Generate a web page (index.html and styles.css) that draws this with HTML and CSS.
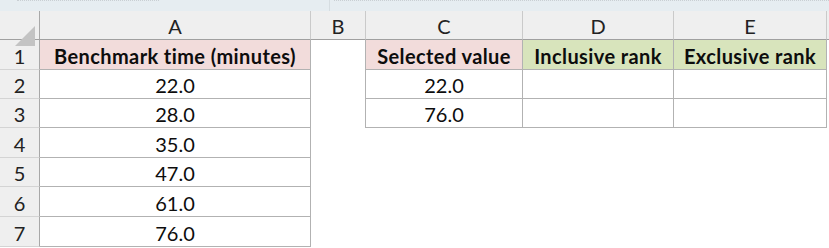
FILE: index.html
```html
<!DOCTYPE html>
<html>
<head>
<meta charset="utf-8">
<link rel="stylesheet" href="styles.css">
</head>
<body>
<div class="sheet">
  <div class="strip">
    <div class="strip-box strip-box-left"></div>
    <div class="strip-sep"></div>
    <div class="strip-box strip-box-right"></div>
  </div>
  <div class="row hdr">
    <div class="c rh corner"><svg class="tri" width="20" height="20" viewBox="0 0 20 20"><polygon points="20,0 20,20 0,20" fill="#c3c3c3"/></svg></div>
    <div class="c ca ch">A</div>
    <div class="c cb ch">B</div>
    <div class="c cc ch">C</div>
    <div class="c cd ch">D</div>
    <div class="c ce ch">E</div>
    <div class="c cr ch"></div>
  </div>
  <div class="row r30">
    <div class="c rh">1</div>
    <div class="c ca t pink bold">Benchmark time (minutes)</div>
    <div class="c cb edge"></div>
    <div class="c cc t pink bold">Selected value</div>
    <div class="c cd t green bold">Inclusive rank</div>
    <div class="c ce t green bold">Exclusive rank</div>
    <div class="c cr"></div>
  </div>
  <div class="row r29">
    <div class="c rh">2</div>
    <div class="c ca t">22.0</div>
    <div class="c cb edge"></div>
    <div class="c cc t">22.0</div>
    <div class="c cd t"></div>
    <div class="c ce t"></div>
    <div class="c cr"></div>
  </div>
  <div class="row r29">
    <div class="c rh">3</div>
    <div class="c ca t">28.0</div>
    <div class="c cb edge"></div>
    <div class="c cc t">76.0</div>
    <div class="c cd t"></div>
    <div class="c ce t"></div>
    <div class="c cr"></div>
  </div>
  <div class="row r30">
    <div class="c rh">4</div>
    <div class="c ca t">35.0</div>
    <div class="c cb"></div>
    <div class="c cc"></div>
    <div class="c cd"></div>
    <div class="c ce"></div>
    <div class="c cr"></div>
  </div>
  <div class="row r29">
    <div class="c rh">5</div>
    <div class="c ca t">47.0</div>
    <div class="c cb"></div>
    <div class="c cc"></div>
    <div class="c cd"></div>
    <div class="c ce"></div>
    <div class="c cr"></div>
  </div>
  <div class="row r30">
    <div class="c rh">6</div>
    <div class="c ca t">61.0</div>
    <div class="c cb"></div>
    <div class="c cc"></div>
    <div class="c cd"></div>
    <div class="c ce"></div>
    <div class="c cr"></div>
  </div>
  <div class="row r30">
    <div class="c rh">7</div>
    <div class="c ca t">76.0</div>
    <div class="c cb"></div>
    <div class="c cc"></div>
    <div class="c cd"></div>
    <div class="c ce"></div>
    <div class="c cr"></div>
  </div>
</div>
</body>
</html>
```
FILE: styles.css
```css
html, body {
  margin: 0;
  padding: 0;
  background: #ffffff;
}
.sheet {
  width: 829px;
  font-family: Lato, "Open Sans", sans-serif;
  font-size: 20px;
  color: #0d0d0d;
}
.strip {
  height: 11px;
  background: #e6edf1;
  display: flex;
  align-items: flex-start;
}
.strip-box {
  height: 0;
  border-top: 1px dotted #c9cfd3;
}
.strip-box-left {
  margin-left: 17px;
  width: 142px;
}
.strip-sep {
  margin-left: 170px;
  width: 1px;
  height: 11px;
  background: #d6dde1;
}
.strip-box-right {
  margin-left: 4px;
  flex: 1;
}
.row {
  display: flex;
}
.hdr {
  height: 29px;
}
.r30 {
  height: 30px;
}
.r29 {
  height: 29px;
}
.c {
  box-sizing: border-box;
  height: 100%;
  display: flex;
  align-items: center;
  justify-content: center;
  padding-top: 2px;
  white-space: nowrap;
}
.rh {
  width: 40px;
  background: #efefef;
  border-right: 1px solid #a8a8a8;
  border-bottom: 1px solid #d4d4d4;
  color: #222222;
}
.corner {
  position: relative;
  border-bottom: 1px solid #a0a0a0;
}
.tri {
  position: absolute;
  left: 15px;
  top: 15px;
}
.ca { width: 271px; }
.cb { width: 55px; }
.cc { width: 157px; }
.cd { width: 151px; }
.ce { width: 153px; }
.cr { flex: 1; }
.ch {
  background: #efefef;
  border-right: 1px solid #cacaca;
  border-bottom: 1px solid #a0a0a0;
  color: #222222;
}
.cr.ch {
  border-right: none;
}
.t {
  border-right: 1px solid #b2b2b2;
  border-bottom: 1px solid #b2b2b2;
}
.edge {
  border-right: 1px solid #b2b2b2;
}
.pink {
  background: #f2dcdb;
}
.green {
  background: #d8e4bc;
}
.bold {
  font-weight: 700;
  letter-spacing: 0.4px;
}
```
